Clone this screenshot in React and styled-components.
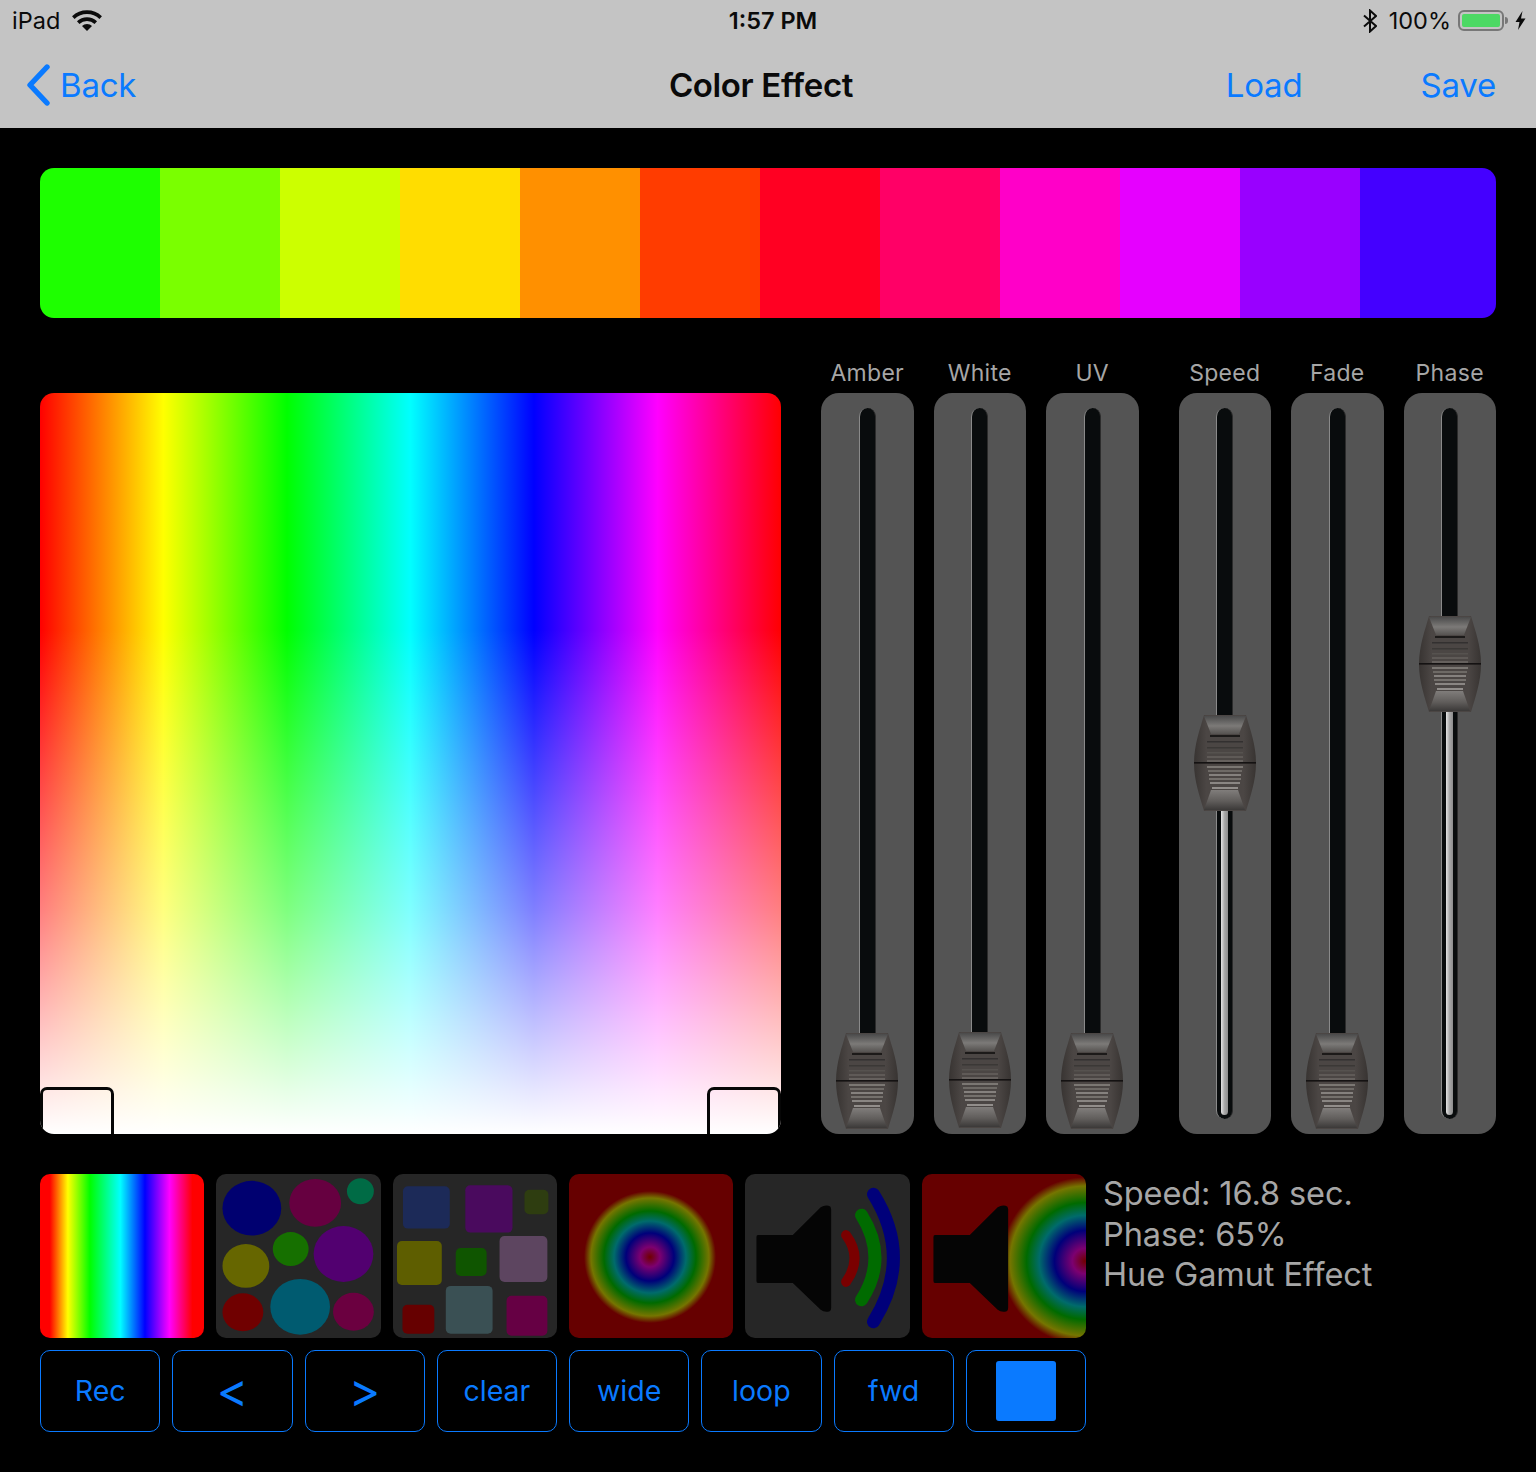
import React from "react";
import styled, { createGlobalStyle } from "styled-components";

const Global = createGlobalStyle`
  html, body { margin: 0; padding: 0; background: #000; }
  * { box-sizing: border-box; }
  #root { font-family: Inter, "Liberation Sans", sans-serif; }
`;

const Page = styled.div`
  width: 1536px;
  height: 1472px;
  background: #000;
  display: flex;
  flex-direction: column;
  overflow: hidden;
`;
const Header = styled.header`
  background: #c4c4c4;
  height: 128px;
  flex: none;
`;
const StatusBar = styled.div`
  height: 41px;
  display: grid;
  grid-template-columns: 1fr auto 1fr;
  align-items: center;
  padding: 0 10px 0 12px;
  color: #0b0b0b;
  font-size: 23.5px;
`;
const StatusSide = styled.div`
  display: flex;
  align-items: center;
  justify-content: ${(p) => (p.$end ? "flex-end" : "flex-start")};
  gap: ${(p) => p.$gap || 0}px;
`;
const Clock = styled.div`
  font-weight: 600;
  margin-left: 8px;
`;
const Battery = styled.div`
  width: 46px;
  height: 21px;
  border: 2px solid #777;
  border-radius: 6px;
  padding: 2px;
  margin-left: 7px;
  position: relative;
`;
const BatteryFill = styled.div`
  height: 100%;
  background: #4cd964;
  border-radius: 2px;
`;
const BatteryNub = styled.div`
  position: absolute;
  right: -6px;
  top: 5px;
  width: 3px;
  height: 7px;
  background: #777;
  border-radius: 0 3px 3px 0;
`;
const NavBar = styled.nav`
  height: 87px;
  display: grid;
  grid-template-columns: 1fr auto 1fr;
  align-items: center;
  padding: 0 40px 0 26px;
  font-size: 33px;
  letter-spacing: -0.2px;
`;
const NavLink = styled.span`
  color: #0a7aff;
`;
const BackLink = styled(NavLink)`
  display: flex;
  align-items: center;
  gap: 9px;
`;
const NavTitle = styled.div`
  font-weight: 600;
  color: #0a0a0a;
  font-size: 33px;
  letter-spacing: -0.35px;
`;
const NavActions = styled.div`
  display: flex;
  justify-content: flex-end;
  gap: 118px;
`;

const Main = styled.main`
  flex: 1;
  padding: 40px;
  display: flex;
  flex-direction: column;
`;
const Strip = styled.div`
  height: 150px;
  display: flex;
  border-radius: 14px;
  overflow: hidden;
  flex: none;
`;
const Swatch = styled.div`
  width: 120px;
  flex-grow: ${(p) => (p.$last ? 1 : 0)};
  background: ${(p) => p.$color};
`;

const EditorRow = styled.section`
  display: flex;
  align-items: flex-end;
  gap: 40px;
  margin-top: 40px;
`;
const ColorField = styled.div`
  position: relative;
  width: 741px;
  height: 741px;
  flex: none;
  border-radius: 14px;
  overflow: hidden;
  background:
    linear-gradient(to bottom, rgba(255,255,255,0) 32%, rgba(255,255,255,0.5) 70%, #fff 100%),
    linear-gradient(to right, #f00 0, #ff0 16.67%, #0f0 33.33%, #0ff 50%, #00f 66.67%, #f0f 83.33%, #f00 100%);
`;
const RangeHandle = styled.div`
  position: absolute;
  bottom: 0;
  ${(p) => (p.$right ? "right: 0;" : "left: 0;")}
  width: 74px;
  height: 47px;
  border: 3px solid #060606;
  border-bottom: 0;
  border-radius: 7px 7px 0 0;
`;
const SliderBank = styled.div`
  display: flex;
  gap: 40px;
  flex: 1;
`;
const SliderGroup = styled.div`
  display: grid;
  grid-auto-flow: column;
  grid-auto-columns: 1fr;
  gap: 20px;
  flex: 1;
`;
const SliderColumn = styled.div`
  display: flex;
  flex-direction: column;
  align-items: stretch;
`;
const SliderLabel = styled.div`
  height: 35px;
  line-height: 30px;
  text-align: center;
  color: #a6a6a6;
  font-size: 23px;
  letter-spacing: 0.3px;
`;
const SliderPanel = styled.div`
  position: relative;
  height: 741px;
  background: #545454;
  border-radius: 18px;
  display: flex;
  justify-content: center;
  padding: 15px 0 15px;
`;
const Groove = styled.div`
  position: relative;
  width: 17px;
  height: 100%;
  background: #090c0d;
  border-radius: 9px;
  border-left: 1px solid #8a8a8a;
  border-right: 1px solid #2c2c2c;
  overflow: hidden;
`;
const GrooveFill = styled.div`
  position: absolute;
  left: 4px;
  right: 4px;
  bottom: 4px;
  top: ${(p) => p.$top}px;
  background: linear-gradient(to right, #e4e4e4, #a8a8a8 50%, #8c8c8c);
  border-radius: 4px;
`;
const ThumbWrap = styled.div`
  position: absolute;
  left: 50%;
  top: ${(p) => p.$top}px;
  width: 62px;
  height: 96px;
  margin-left: -31px;
  line-height: 0;
`;

const BottomRow = styled.section`
  display: flex;
  margin-top: 40px;
  gap: 17px;
`;
const Controls = styled.div`
  width: 1046px;
  flex: none;
  display: flex;
  flex-direction: column;
  gap: 12px;
`;
const ThumbGrid = styled.div`
  display: grid;
  grid-template-columns: repeat(6, 1fr);
  gap: 12px;
`;
const Preset = styled.div`
  height: 164px;
  border-radius: 10px;
  overflow: hidden;
  line-height: 0;
  background: ${(p) => p.$bg};
`;
const PresetArt = styled.svg`
  display: block;
  width: 100%;
  height: 100%;
`;
const ButtonGrid = styled.div`
  display: grid;
  grid-template-columns: repeat(8, 1fr);
  gap: 12px;
`;
const ActionButton = styled.div`
  height: 82px;
  border: 1.5px solid #0a7aff;
  border-radius: 10px;
  color: #0a7aff;
  display: flex;
  align-items: center;
  justify-content: center;
  font-size: ${(p) => (p.$big ? 48 : 28.5)}px;
  padding-bottom: ${(p) => (p.$big ? 3 : 1)}px;
`;
const StopSquare = styled.div`
  width: 60px;
  height: 60px;
  background: #0a7aff;
  border-radius: 3px;
`;
const Info = styled.div`
  color: #a6a6a6;
  font-size: 32.5px;
  line-height: 40.6px;
  letter-spacing: -0.1px;
  white-space: nowrap;
`;
const InfoLine = styled.div``;

const swatches = ["#1eff00","#7aff00","#ccff00","#ffdd00","#ff9000","#ff3c00","#ff0022","#ff0066","#ff00c8","#e600ff","#9900ff","#4400ff"];
const rainbow = "linear-gradient(to right, #f00 6%, #ff0 17%, #0f0 30.5%, #0ff 49%, #00f 64%, #f0f 79%, #f00 93%)";
const rings = (cx, cy, k) => `radial-gradient(circle at ${cx}px ${cy}px,
  #700000 0, #7c0070 ${10 * k}px, #00007a ${24 * k}px, #006b6b ${36 * k}px, #006a00 ${46 * k}px, #757500 ${59 * k}px, #660000 ${66 * k}px)`;

const circles = [
  [36,34,29.5,27.5,"#000070"],[99.6,28.7,26,24,"#660040"],[145,17,13.5,13,"#006b45"],
  [128,80,30,28,"#520070"],[75,75,18,17,"#167000"],[30,92,23.5,22,"#666600"],
  [27,138.5,20.5,19,"#700000"],[84.5,133,30,28,"#005b70"],[138,138,20.5,19,"#6b0040"],
];
const squares = [
  [10,12,47,42.5,"#1c2a58"],[72.6,11,47.4,47.5,"#4a0a5e"],[132,15.5,24,24.5,"#2e3d10"],
  [4,67,45,44,"#5e5e00"],[63,74,31,28,"#0f5500"],[107,62,48,46,"#5d4560"],
  [9.5,131,32,29,"#660000"],[53,112,47,48,"#3a5054"],[114,122,41,40,"#660044"],
];
const ridges = [
  [41,13,49,"#5f5a57"],[45,13,49,"#66615e"],[51,13,49,"#7b7773"],[55,14,48,"#6e6a66"],
  [59,15,47,"#85817e"],[63,15,47,"#75716d"],[67,16,46,"#8a8683"],[72,18,44,"#928e8b"],
];

function Speaker({ arcs }) {
  return (
    <>
      <path d="M13 61 H48 L76 33 Q80 30.5 84 31.5 Q86.5 32 86.5 35 V134 Q86.5 138 83 138 Q79 138.5 76 136 L48 109 H13 Q11.5 109 11.5 107 V63 Q11.5 61 13 61Z" fill="#050505" />
      {arcs && (
        <g fill="none" strokeLinecap="round">
          <path d="M101.5 61 Q118.5 84 101.5 108" stroke="#7a0000" strokeWidth="10" />
          <path d="M117 41 Q144 84 117 126" stroke="#006b00" strokeWidth="13" />
          <path d="M129 20 Q169 84 129 148" stroke="#00007a" strokeWidth="13" />
        </g>
      )}
    </>
  );
}

function Thumb({ top }) {
  return (
    <ThumbWrap $top={top}>
      <svg width="62" height="96" viewBox="0 0 62 96">
        <defs>
          <linearGradient id="capTop" x1="0" y1="0" x2="0" y2="1">
            <stop offset="0" stopColor="#4a4a4a" />
            <stop offset=".55" stopColor="#7c7a78" />
            <stop offset="1" stopColor="#565351" />
          </linearGradient>
          <linearGradient id="capBottom" x1="0" y1="0" x2="0" y2="1">
            <stop offset="0" stopColor="#807d7b" />
            <stop offset=".55" stopColor="#605d5b" />
            <stop offset="1" stopColor="#3b3938" />
          </linearGradient>
          <linearGradient id="bodyShade" x1="0" y1="0" x2="1" y2="0">
            <stop offset="0" stopColor="#383432" />
            <stop offset=".2" stopColor="#4b4644" />
            <stop offset=".8" stopColor="#4b4644" />
            <stop offset="1" stopColor="#383432" />
          </linearGradient>
        </defs>
        <path d="M10 0H52C56 14 62 30 62 48C62 66 56 82 52 96H10C6 82 0 66 0 48C0 30 6 14 10 0Z" fill="url(#bodyShade)" />
        <path d="M10 1H52L45 19H17Z" fill="url(#capTop)" />
        <path d="M17 75H44L51 95H10Z" fill="url(#capBottom)" />
        <rect x="16" y="20" width="30" height="2" fill="#1c1a19" />
        <rect x="13" y="26" width="36" height="1.5" fill="#333030" />
        <rect x="13" y="32" width="36" height="1.5" fill="#3b3836" />
        <rect x="13" y="37" width="36" height="1.5" fill="#56524f" />
        {ridges.map(([y, a, b, c]) => (
          <rect key={y} x={a} y={y} width={b - a} height="2" fill={c} />
        ))}
        <rect x="0" y="47" width="62" height="1.6" fill="#141212" />
      </svg>
    </ThumbWrap>
  );
}

function Slider({ label, thumb = 640 }) {
  return (
    <SliderColumn>
      <SliderLabel>{label}</SliderLabel>
      <SliderPanel>
        <Groove>
          <GrooveFill $top={thumb + 70} />
        </Groove>
        <Thumb top={thumb} />
      </SliderPanel>
    </SliderColumn>
  );
}

export default function App() {
  return (
    <Page>
      <Global />
      <Header>
        <StatusBar>
          <StatusSide $gap={12}>
            <span>iPad</span>
            <svg width="30" height="21" viewBox="0 0 30 21">
              <g fill="none" stroke="#0b0b0b" strokeWidth="3.6">
                <path d="M1.3 7.6A20 20 0 0 1 28.7 7.6" />
                <path d="M6.2 12.6A13 13 0 0 1 23.8 12.6" />
              </g>
              <path d="M15 21L10 16A7 7 0 0 1 20 16Z" fill="#0b0b0b" />
            </svg>
          </StatusSide>
          <Clock>1:57 PM</Clock>
          <StatusSide $end>
            <svg width="14" height="24" viewBox="0 0 14 24" style={{ marginRight: 12 }}>
              <path d="M1 6.5L13 17L7 22.5V1.5L13 7L1 17.5" fill="none" stroke="#0b0b0b" strokeWidth="2" />
            </svg>
            <span>100%</span>
            <Battery>
              <BatteryFill />
              <BatteryNub />
            </Battery>
            <svg width="11" height="19" viewBox="0 0 11 19" style={{ marginLeft: 11 }}>
              <path d="M7.5 0L0.5 11H4.5L3 19L10.5 7.5H6Z" fill="#0b0b0b" />
            </svg>
          </StatusSide>
        </StatusBar>
        <NavBar>
          <BackLink>
            <svg width="25" height="42" viewBox="0 0 25 42">
              <path d="M21 3L4 21L21 39" fill="none" stroke="#0a7aff" strokeWidth="5.4" strokeLinecap="round" strokeLinejoin="round" />
            </svg>
            Back
          </BackLink>
          <NavTitle>Color Effect</NavTitle>
          <NavActions>
            <NavLink>Load</NavLink>
            <NavLink>Save</NavLink>
          </NavActions>
        </NavBar>
      </Header>
      <Main>
        <Strip>
          {swatches.map((c, i) => (
            <Swatch key={c} $color={c} $last={i === swatches.length - 1} />
          ))}
        </Strip>
        <EditorRow>
          <ColorField>
            <RangeHandle />
            <RangeHandle $right />
          </ColorField>
          <SliderBank>
            <SliderGroup>
              <Slider label="Amber" />
              <Slider label="White" thumb={639} />
              <Slider label="UV" />
            </SliderGroup>
            <SliderGroup>
              <Slider label="Speed" thumb={322} />
              <Slider label="Fade" />
              <Slider label="Phase" thumb={223} />
            </SliderGroup>
          </SliderBank>
        </EditorRow>
        <BottomRow>
          <Controls>
            <ThumbGrid>
              <Preset $bg={rainbow} />
              <Preset $bg="#262626">
                <PresetArt viewBox="0 0 165 164">
                  {circles.map(([cx, cy, rx, ry, fill]) => (
                    <ellipse key={fill + cx} cx={cx} cy={cy} rx={rx} ry={ry} fill={fill} />
                  ))}
                </PresetArt>
              </Preset>
              <Preset $bg="#262626">
                <PresetArt viewBox="0 0 165 164">
                  {squares.map(([x, y, w, h, fill]) => (
                    <rect key={fill} x={x} y={y} width={w} height={h} rx="5" fill={fill} />
                  ))}
                </PresetArt>
              </Preset>
              <Preset $bg={rings(81, 83, 1)} />
              <Preset $bg="#262626">
                <PresetArt viewBox="0 0 165 164"><Speaker arcs /></PresetArt>
              </Preset>
              <Preset $bg={rings(163, 87, 1.27)}>
                <PresetArt viewBox="0 0 165 164"><Speaker /></PresetArt>
              </Preset>
            </ThumbGrid>
            <ButtonGrid>
              <ActionButton>Rec</ActionButton>
              <ActionButton $big>&lt;</ActionButton>
              <ActionButton $big>&gt;</ActionButton>
              <ActionButton>clear</ActionButton>
              <ActionButton>wide</ActionButton>
              <ActionButton>loop</ActionButton>
              <ActionButton>fwd</ActionButton>
              <ActionButton><StopSquare /></ActionButton>
            </ButtonGrid>
          </Controls>
          <Info>
            <InfoLine>Speed: 16.8 sec.</InfoLine>
            <InfoLine>Phase: 65%</InfoLine>
            <InfoLine>Hue Gamut Effect</InfoLine>
          </Info>
        </BottomRow>
      </Main>
    </Page>
  );
}
